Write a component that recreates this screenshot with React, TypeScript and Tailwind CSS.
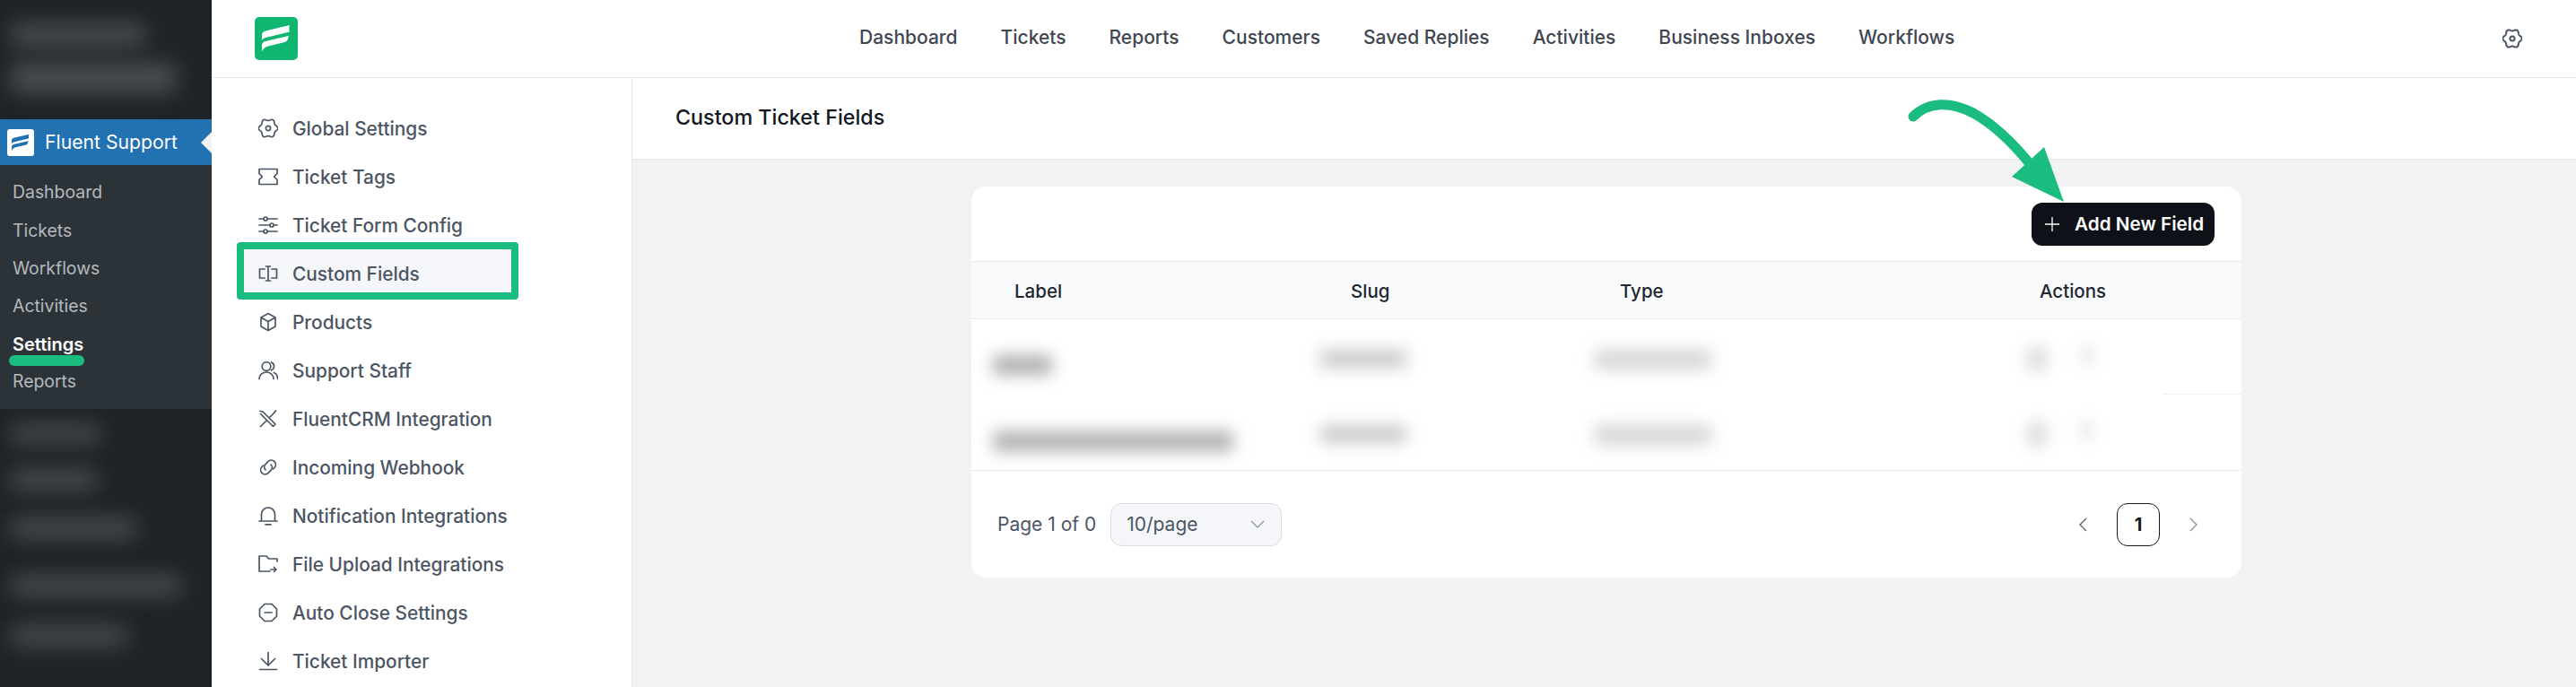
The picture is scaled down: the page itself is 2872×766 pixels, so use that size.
import React from "react";

const sw = { fill: "none", stroke: "#4b5563", strokeWidth: 1.7, strokeLinecap: "round" as const, strokeLinejoin: "round" as const };

function gearPoints() {
  const p: string[] = [];
  for (let i = 0; i < 120; i++) {
    const t = (i / 120) * Math.PI * 2;
    const r = 9.6 + 1.1 * Math.cos(6 * t);
    p.push(`${(11 + r * Math.cos(t)).toFixed(2)},${(11 + r * Math.sin(t)).toFixed(2)}`);
  }
  return p.join(" ");
}

function Gear({ weight = 1.7 }: { weight?: number }) {
  return (
    <svg width={22} height={22} viewBox="0 0 22 22" {...sw} strokeWidth={weight}>
      <polygon points={gearPoints()} />
      <circle cx="11" cy="11" r="2.6" />
    </svg>
  );
}
const I = ({ children }: { children: React.ReactNode }) => (
  <svg width="22" height="22" viewBox="0 0 22 22" {...sw}>{children}</svg>
);
const icons: Record<string, React.ReactNode> = {
  gear: <Gear />,
  ticket: <I><path d="M1 2.500h20v5.200l-3.400 3.300 3.400 3.300v5.200H1v-5.200L4.400 11 1 7.700z" /></I>,
  sliders: <I><path d="M1 4h5M10 4h11M1 11h12M17 11h4M1 18h5M10 18h11" /><circle cx="8" cy="4" r="2" /><circle cx="15" cy="11" r="2" /><circle cx="8" cy="18" r="2" /></I>,
  cursor: <I><path d="M7 6H1.500v10H7M15 6h5.500v10H15M8.500 3h5M8.500 19h5M11 3v16" /></I>,
  box: <I><path d="M11 1.500l8 4.500v10l-8 4.500-8-4.500V6zM3 6l8 4.500L19 6M11 10.500v10" /></I>,
  users: <I><circle cx="9" cy="6.500" r="4.800" /><path d="M1 20.500c0-4.500 3.500-7.500 8-7.500s8 3 8 7.500M14.500 2c2 .8 3 2.400 3 4.500s-1 3.500-3 4.300M17.500 13.500c2.500 1 4 3.500 4 7" /></I>,
  tools: <I><path d="M2.500 5.500l14 14 2.500-2.500-14-14M2 2.500l3 .5M12.500 9.500L18 4M17 5l2.500-3M9 13l-6.500 6.500" /></I>,
  link: <I><path d="M8 14a4.500 4.500 0 0 1 0-6.300l3-3a4.800 4.800 0 0 1 7 6.800l-1.500 1.500" /><path d="M14 8a4.500 4.500 0 0 1 0 6.300l-3 3a4.800 4.800 0 0 1-7-6.800l1.500-1.500" /></I>,
  bell: <I><path d="M1 17h20M3.500 17V9.500a7.500 7.500 0 0 1 15 0V17M8 20.800h6" /></I>,
  folder: <I><path d="M21 8V5h-9.500L9 2H1v17h12M14 17h6M17.500 14.500L20 17l-2.500 2.500" /></I>,
  minus: <I><path d="M7 1.500h8l5.500 5.500v8L15 20.500H7L1.500 15V7zM7 11h8" /></I>,
  download: <I><path d="M11 1.500v14M3.500 8.500l7.500 7.500 7.500-7.500M1.500 20.500h19" /></I>,
};

function Logo({ size, bg, fg, radius }: { size: number; bg: string; fg: string; radius: string }) {
  return (
    <svg width={size} height={size} viewBox="0 0 48 48" className="shrink-0">
      <rect width="48" height="48" rx={radius} fill={bg} />
      <path fill={fg} d="M8 20c0-3 2-4 5-4.800L39 9c-1.300 3-.6 5.500 0 7.500L13 22.700c-2.500.6-4 1.500-5 3.300z" />
      <path fill={fg} d="M8 31.500c0-3 2-4 5-4.700L37.500 21c.5 3-1.500 6.500-5 7.300L15 32.500c-3 .8-5.500 2.500-7 6z" />
    </svg>
  );
}

const top = ["Dashboard", "Tickets", "Reports", "Customers", "Saved Replies", "Activities", "Business Inboxes", "Workflows"];
const wp = ["Dashboard", "Tickets", "Workflows", "Activities", "Settings", "Reports"];
const menu: [string, string][] = [
  ["gear", "Global Settings"],
  ["ticket", "Ticket Tags"],
  ["sliders", "Ticket Form Config"],
  ["cursor", "Custom Fields"],
  ["box", "Products"],
  ["users", "Support Staff"],
  ["tools", "FluentCRM Integration"],
  ["link", "Incoming Webhook"],
  ["bell", "Notification Integrations"],
  ["folder", "File Upload Integrations"],
  ["minus", "Auto Close Settings"],
  ["download", "Ticket Importer"],
];

function WpBlur({ w, h, mt }: { w: string; h: string; mt: string }) {
  return <div className={`ml-[12px] rounded-sm bg-[#4a4e51] blur-[12px] ${w} ${h} ${mt}`} />;
}

function Row({ border, labelW, labelTop, slugTop, second }: { border: boolean; labelW: string; labelTop: string; slugTop: string; second: string }) {
  return (
    <div className="relative grid h-[84px] grid-cols-[375px_300px_468px_1fr] pl-[48px]">
      <div><div className={`-ml-[24px] h-[22px] rounded bg-[#adafb1] blur-[9px] ${labelW} ${labelTop}`} /></div>
      <div><div className={`-ml-[34px] h-[20px] w-[96px] rounded bg-[#c8c9cb] blur-[9px] ${slugTop}`} /></div>
      <div><div className={`-ml-[28px] h-[22px] w-[130px] rounded bg-[#d4d5d6] blur-[9px] ${slugTop}`} /></div>
      <div className="flex">
        <div className={`-ml-[16px] h-[32px] w-[26px] rounded-full bg-[#e2e2e2] blur-[8px] ${second}`} />
        <div className={`ml-[34px] h-[24px] w-[18px] rounded-full bg-[#ececec] blur-[8px] ${second}`} />
      </div>
      {border && <div className="absolute bottom-0 right-0 h-px w-[88px] bg-[#eef0f2]" />}
    </div>
  );
}

export default function App() {
  return (
    <div className="relative flex h-[766px] w-[2872px] overflow-hidden bg-white font-['Inter',sans-serif]">
      {/* WordPress sidebar */}
      <aside className="flex w-[236px] shrink-0 flex-col bg-[#1d2327]">
        <div className="h-[133px] overflow-hidden pt-[26px]">
          <WpBlur w="w-[150px]" h="h-[26px]" mt="mt-0" />
          <WpBlur w="w-[185px]" h="h-[34px]" mt="mt-[18px]" />
        </div>
        <div className="relative flex h-[51px] items-center bg-[#2271b1] pl-[8px] text-[21.2px] leading-none text-white">
          <Logo size={30} bg="#ffffff" fg="#2271b1" radius="5" />
          <span className="ml-[12px]">Fluent Support</span>
          <div className="absolute right-0 top-[14px] h-0 w-0 border-y-[12px] border-r-[12px] border-y-transparent border-r-[#f1f2f4]" />
        </div>
        <ul className="h-[272px] bg-[#2c3338] pt-[10px]">
          {wp.map((t) => (
            <li key={t} className={`flex h-[42.2px] items-center pl-[14px] leading-none ${t === "Settings" ? "text-[20px] font-semibold text-white" : "text-[19.4px] text-[#b4b9be]"}`}>
              {t}
            </li>
          ))}
        </ul>
        <div className="flex-1 overflow-hidden pt-[18px]">
          <WpBlur w="w-[100px]" h="h-[20px]" mt="mt-0" />
          <WpBlur w="w-[96px]" h="h-[22px]" mt="mt-[30px]" />
          <WpBlur w="w-[140px]" h="h-[22px]" mt="mt-[32px]" />
          <WpBlur w="w-[190px]" h="h-[22px]" mt="mt-[42px]" />
          <WpBlur w="w-[130px]" h="h-[22px]" mt="mt-[34px]" />
        </div>
      </aside>

      <div className="flex min-w-0 flex-1 flex-col">
        {/* Top nav */}
        <header className="flex h-[87px] shrink-0 items-center border-b border-[#e5e7eb] bg-white pl-[48px] pr-[60px]">
          <Logo size={48} bg="#0fb671" fg="#ffffff" radius="5" />
          <nav className="mb-[3px] ml-[626px] flex gap-[48px] text-[21px] font-medium leading-none text-[#3f4652]">
            {top.map((t) => (
              <span key={t}>{t}</span>
            ))}
          </nav>
          <div className="ml-auto"><Gear weight={2} /></div>
        </header>

        <div className="flex min-h-0 flex-1">
          {/* Settings menu */}
          <ul className="w-[469px] shrink-0 border-r border-[#e5e7eb] bg-white pt-[29px]">
            {menu.map(([ic, label]) => (
              <li key={label} className="relative flex h-[54px] items-center pl-[52px] text-[20.85px] font-medium leading-none text-[#4b5563]">
                {label === "Custom Fields" && (
                  <div className="absolute left-[28px] top-[-8px] h-[64px] w-[314px] rounded-[4px] border-[8px] border-[#1abc80] bg-[#f5f6fa]" />
                )}
                <span className="relative w-[38px]">{icons[ic]}</span>
                <span className="relative mt-[2px]">{label}</span>
              </li>
            ))}
          </ul>

          {/* Content */}
          <main className="flex min-w-0 flex-1 flex-col bg-[#f1f2f4]">
            <div className="flex h-[91px] shrink-0 items-center border-b border-[#e3e5e8] bg-white pb-[2px] pl-[48px] text-[23.300px] font-medium leading-none text-[#14181f]">
              Custom Ticket Fields
            </div>
            <section className="ml-[378px] mt-[30px] h-[436px] w-[1416px] overflow-hidden rounded-[16px] bg-white">
              <div className="flex h-[84px] items-start justify-end border-b border-[#e9ebee] pr-[30px] pt-[18px]">
                <button className="flex h-[48px] w-[204px] items-center rounded-[12px] bg-[#0e1118] pl-[14px] text-[20.700px] font-semibold leading-none text-white">
                  <svg width="18" height="18" viewBox="0 0 18 18" fill="none" stroke="#ffffff" strokeWidth="1.300"><path d="M9 1v16M1 9h16" /></svg>
                  <span className="ml-[16px]">Add New Field</span>
                </button>
              </div>
              <div className="grid h-[64px] grid-cols-[375px_300px_468px_1fr] items-center border-b border-[#e9ebee] bg-[#f9fafc] pl-[48px] pt-[3px] text-[20.500px] font-medium leading-none text-[#1f2630]">
                <span>Label</span>
                <span>Slug</span>
                <span>Type</span>
                <span>Actions</span>
              </div>
              <Row border labelW="w-[66px]" labelTop="mt-[40px]" slugTop="mt-[34px]" second="mt-[28px]" />
              <div className="border-b border-[#e9ebee]">
                <Row border={false} labelW="w-[268px]" labelTop="mt-[41px]" slugTop="mt-[34px]" second="mt-[28px]" />
              </div>
              <div className="flex h-[120px] items-center pb-[1px] pl-[29px] pr-[49px]">
                <span className="text-[21px] leading-none text-[#4b5563]">Page 1 of 0</span>
                <div className="ml-[16px] flex h-[48px] w-[191px] items-center rounded-[12px] border border-[#d9dce2] bg-[#f5f6fa] pl-[17px] pr-[18px] text-[21px] leading-none text-[#4b5563]">
                  <span>10/page</span>
                  <svg className="ml-auto" width="16" height="10" viewBox="0 0 16 10" fill="none" stroke="#8a8f98" strokeWidth="1.200"><path d="M1 1l7 7 7-7" /></svg>
                </div>
                <div className="ml-auto flex items-center">
                  <svg width="10" height="16" viewBox="0 0 10 16" fill="none" stroke="#555b65" strokeWidth="1.300"><path d="M8 1L1 8l7 7" /></svg>
                  <div className="ml-[32px] flex h-[48px] w-[48px] items-center justify-center rounded-[12px] border border-[#14181f] text-[20px] font-bold leading-none text-[#14181f]">1</div>
                  <svg className="ml-[32px]" width="10" height="16" viewBox="0 0 10 16" fill="none" stroke="#8a8f98" strokeWidth="1.300"><path d="M2 1l7 7-7 7" /></svg>
                </div>
              </div>
            </section>
          </main>
        </div>
      </div>

      {/* Annotations drawn over the page */}
      <div className="absolute left-[10px] top-[396px] h-[12px] w-[84px] rounded-full bg-[#1abc80]" />
      <svg className="absolute left-[2120px] top-[100px]" width="200" height="140" viewBox="2120 100 200 140" fill="none">
        <path d="M2133 130C2150 113 2175 113 2200 126C2225 140 2245 160 2265 185" stroke="#1abc80" strokeWidth="11" strokeLinecap="round" />
        <path d="M2279 164L2301 225L2243 197Z" fill="#1abc80" />
      </svg>
    </div>
  );
}
